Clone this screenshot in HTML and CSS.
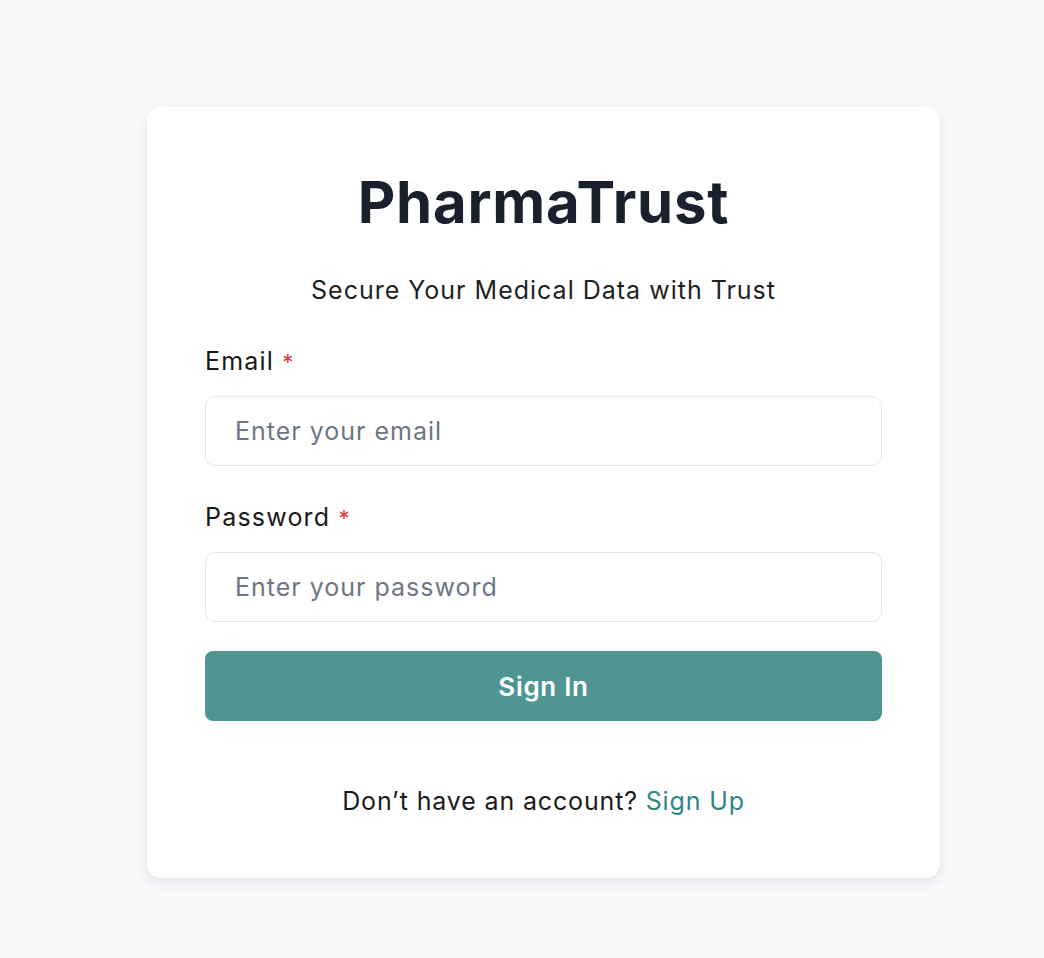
FILE: index.html
```html
<!DOCTYPE html>
<html lang="en">
<head>
<meta charset="utf-8">
<title>PharmaTrust</title>
<link rel="stylesheet" href="styles.css">
</head>
<body>
<main class="page">
  <div class="card">
    <h1 class="title">PharmaTrust</h1>
    <p class="subtitle">Secure Your Medical Data with Trust</p>
    <form class="form">
      <div class="field">
        <label class="label" for="email">Email <span class="req">*</span></label>
        <input class="input" id="email" type="email" placeholder="Enter your email">
      </div>
      <div class="field">
        <label class="label" for="password">Password <span class="req">*</span></label>
        <input class="input" id="password" type="password" placeholder="Enter your password">
      </div>
      <button class="btn" type="button">Sign In</button>
    </form>
    <p class="footer">Don’t have an account? <a class="link" href="#">Sign Up</a></p>
  </div>
</main>
</body>
</html>
```
FILE: styles.css
```css
html, body {
  margin: 0;
  padding: 0;
  background: #f8f9fb;
  font-family: Inter, "Noto Sans", "Liberation Sans", sans-serif;
  color: #1a1a1a;
}
.page {
  padding: 107px 0 0 147px;
  min-height: 958px;
  box-sizing: border-box;
}
.card {
  width: 793px;
  box-sizing: border-box;
  background: #ffffff;
  border-radius: 14px;
  box-shadow: 0 5px 14px rgba(20, 30, 50, 0.08), 0 1px 3px rgba(20, 30, 50, 0.04);
  padding: 60px 58px 59px;
  display: flex;
  flex-direction: column;
}
.title {
  margin: 0;
  text-align: center;
  font-size: 58px;
  line-height: 70px;
  font-weight: 700;
  color: #1a202c;
  letter-spacing: 0.8px;
}
.subtitle {
  margin: 35px 0 0;
  text-align: center;
  font-size: 25px;
  line-height: 36px;
  color: #1f1f1f;
  letter-spacing: 1px;
}
.form {
  margin-top: 35px;
  display: flex;
  flex-direction: column;
}
.field {
  display: flex;
  flex-direction: column;
  gap: 17px;
  margin-bottom: 33px;
}
.field:nth-child(2) {
  margin-bottom: 29px;
}
.label {
  display: block;
  height: 36px;
  font-size: 25px;
  line-height: 36px;
  color: #1a1a1a;
  letter-spacing: 1.2px;
}
.req {
  color: #d53b3b;
  font-size: 22px;
  line-height: 1;
}
.input {
  height: 70px;
  box-sizing: border-box;
  border: 1.5px solid #e3e6eb;
  border-radius: 10px;
  padding: 0 29px;
  font-family: inherit;
  font-size: 25px;
  letter-spacing: 1px;
  color: #1a1a1a;
  background: #fff;
  outline: none;
}
.input::placeholder {
  color: #6e7683;
}
.btn {
  height: 70px;
  border: none;
  border-radius: 8px;
  background: #4f9591;
  color: #ffffff;
  font-family: inherit;
  font-size: 26px;
  font-weight: 600;
  letter-spacing: 0.7px;
  cursor: pointer;
}
.footer {
  margin: 62px 0 0;
  text-align: center;
  font-size: 25px;
  line-height: 36px;
  color: #1a1a1a;
  letter-spacing: 0.85px;
}
.link {
  color: #2f8583;
  text-decoration: none;
}
```
